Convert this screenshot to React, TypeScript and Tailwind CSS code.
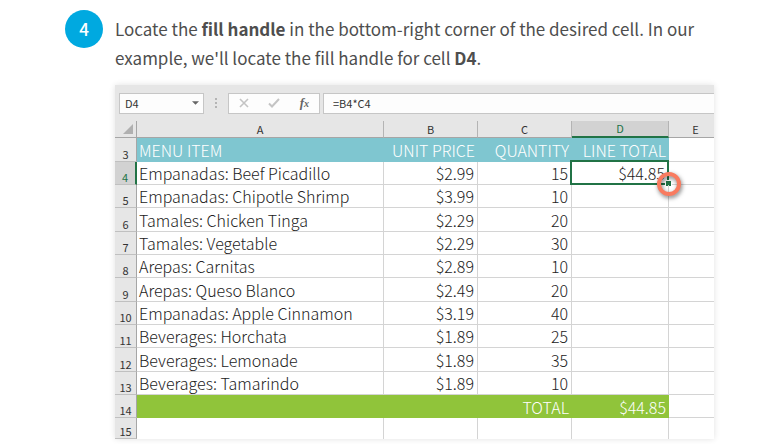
const rows = [
  { n: 4, item: "Empanadas: Beef Picadillo", price: "$2.99", qty: "15", total: "$44.85" },
  { n: 5, item: "Empanadas: Chipotle Shrimp", price: "$3.99", qty: "10", total: "" },
  { n: 6, item: "Tamales: Chicken Tinga", price: "$2.29", qty: "20", total: "" },
  { n: 7, item: "Tamales: Vegetable", price: "$2.29", qty: "30", total: "" },
  { n: 8, item: "Arepas: Carnitas", price: "$2.89", qty: "10", total: "" },
  { n: 9, item: "Arepas: Queso Blanco", price: "$2.49", qty: "20", total: "" },
  { n: 10, item: "Empanadas: Apple Cinnamon", price: "$3.19", qty: "40", total: "" },
  { n: 11, item: "Beverages: Horchata", price: "$1.89", qty: "25", total: "" },
  { n: 12, item: "Beverages: Lemonade", price: "$1.89", qty: "35", total: "" },
  { n: 13, item: "Beverages: Tamarindo", price: "$1.89", qty: "10", total: "" },
];

const rowHeight = (n: number) => (n % 3 === 0 ? "h-[24px]" : "h-[23px]");

const cell = "border-r border-b border-[#d4d4d4] p-0";
const text = "pr-[3px] pl-[2px]";
const band = "p-0 pr-[3px] pl-[2px] text-white";

function RowHead({ n, active = false }: { n: number; active?: boolean }) {
  return (
    <th
      scope="row"
      className={`border-b border-b-[#c0c0c0] p-0 align-bottom text-[11px] leading-[14px] font-normal ${
        active
          ? "border-r-2 border-r-[#217346] bg-[#d2d2d2] text-[#217346]"
          : "border-r border-r-[#a6a6a6] bg-[#e6e6e6] text-[#333]"
      }`}
    >
      {n}
    </th>
  );
}

function ColHead({ name, active = false }: { name: string; active?: boolean }) {
  return (
    <th
      scope="col"
      className={`border-r border-r-[#b4b4b4] p-0 text-[11px] leading-[15px] font-normal ${
        active
          ? "border-b-2 border-b-[#217346] bg-[#d2d2d2] text-[#217346]"
          : "border-b border-b-[#a6a6a6] text-[#333] last:border-r-0 last:pl-2"
      }`}
    >
      {name}
    </th>
  );
}

function FillHandle() {
  return (
    <>
      <span className="pointer-events-none absolute -top-[2px] -right-px -bottom-px -left-[2px] border-2 border-[#217346]" />
      <svg
        className="absolute -right-[17px] -bottom-[16px] z-10 h-8 w-8 overflow-visible drop-shadow-[1px_2px_2px_rgba(0,0,0,0.5)]"
        viewBox="0 0 32 32"
        aria-label="Fill handle"
      >
        <circle cx="16" cy="16" r="10" fill="none" stroke="#f97b5f" strokeWidth="4" />
      </svg>
      <span className="absolute -right-[3px] -bottom-[2px] h-[5px] w-[5px] bg-[#217346] outline-1 outline-white" />
    </>
  );
}

export default function App() {
  return (
    <main className="bg-white pt-[14px] pr-[47px] pb-[5px] pl-[65px] font-['Noto_Sans_CJK_SC','Noto_Sans',sans-serif]">
      <div className="flex items-start">
        <div className="mt-[-4px] flex h-[38px] w-[38px] shrink-0 items-center justify-center rounded-full bg-[#00a9e0] text-[17px] font-medium text-white">
          4
        </div>
        <p className="ml-3 text-[17px] leading-[29px] text-[#4e4e4e]">
          Locate the <strong className="font-bold">fill handle</strong> in the bottom-right corner of the
          desired cell. In our example, we'll locate the fill handle for cell{" "}
          <strong className="font-bold">D4</strong>.
        </p>
      </div>

      <section className="mt-[13px] ml-[50px] bg-white shadow-[0_0_6px_rgba(0,0,0,0.12)]">
        <div className="flex h-9 items-center bg-[#e6e6e6] pl-1 text-[11px] text-[#333]">
          <div className="flex h-[21px] w-[85px] items-center border border-[#c6c6c6] bg-[#fdfdfd]">
            <input aria-label="Name box" defaultValue="D4" className="w-0 flex-1 pl-[5px] outline-none" />
            <button aria-label="Show names" className="px-1">
              <svg viewBox="0 0 8 4" className="h-1 w-[7px]" fill="#666">
                <path d="M0 0h8L4 4z" />
              </svg>
            </button>
          </div>
          <svg viewBox="0 0 2 10" className="mx-[11px] h-[10px] w-[2px]" fill="#b4b4b4">
            <path d="M0 0h2v2H0zM0 4h2v2H0zM0 8h2v2H0z" />
          </svg>
          <div className="flex h-[21px] w-[92px] items-center justify-between border border-[#c6c6c6] bg-[#fdfdfd] px-[10px]">
            <button aria-label="Cancel">
              <svg viewBox="0 0 10 10" className="h-[10px] w-[10px]" fill="none" stroke="#c4c4c4" strokeWidth="1.6">
                <path d="M1 1l8 8M9 1L1 9" />
              </svg>
            </button>
            <button aria-label="Enter">
              <svg viewBox="0 0 12 10" className="h-[10px] w-3" fill="none" stroke="#c4c4c4" strokeWidth="2">
                <path d="M1 5.500l3 3L11 1" />
              </svg>
            </button>
            <button
              aria-label="Insert function"
              className="font-['Liberation_Serif',serif] text-[13px] leading-4 font-bold text-[#666] italic"
            >
              f<span className="text-[10px]">x</span>
            </button>
          </div>
          <input
            aria-label="Formula bar"
            defaultValue="=B4*C4"
            className="ml-[3px] h-[21px] min-w-0 flex-1 border border-r-0 border-[#c6c6c6] bg-[#fdfdfd] pl-[9px] outline-none"
          />
        </div>

        <table className="w-full table-fixed border-separate border-spacing-0 text-[16px] leading-[22px] font-light text-[#222]">
          <colgroup>
            <col className="w-[22px]" />
            <col />
            <col className="w-[94px]" />
            <col className="w-[94px]" />
            <col className="w-[97px]" />
            <col className="w-[45px]" />
          </colgroup>
          <thead>
            <tr className="h-[17px] bg-[#e6e6e6]">
              <td className="border-r border-b border-[#a6a6a6] p-0">
                <svg viewBox="0 0 10 10" className="ml-auto mr-[3px] h-[10px] w-[10px]" fill="#b0b0b0">
                  <path d="M10 0v10H0z" />
                </svg>
              </td>
              <ColHead name="A" />
              <ColHead name="B" />
              <ColHead name="C" />
              <ColHead name="D" active />
              <ColHead name="E" />
            </tr>
          </thead>
          <tbody>
            <tr className="h-[24px]">
              <RowHead n={3} />
              <td className={`${band} bg-[#7fc6d0]`}>MENU ITEM</td>
              <td className={`${band} bg-[#7fc6d0] text-right`}>UNIT PRICE</td>
              <td className={`${band} bg-[#7fc6d0] text-right`}>QUANTITY</td>
              <td className={`${band} bg-[#7fc6d0] text-right whitespace-nowrap`}>LINE TOTAL</td>
              <td className="border-b border-[#d4d4d4] p-0" />
            </tr>
            {rows.map((r) => (
              <tr key={r.n} className={rowHeight(r.n)}>
                <RowHead n={r.n} active={r.n === 4} />
                <td className={`${cell} ${text} whitespace-nowrap`}>{r.item}</td>
                <td className={`${cell} ${text} text-right`}>{r.price}</td>
                <td className={`${cell} ${text} text-right`}>{r.qty}</td>
                <td className={`${cell} ${text} relative text-right`}>
                  {r.total}
                  {r.n === 4 && <FillHandle />}
                </td>
                <td className="border-b border-[#d4d4d4] p-0" />
              </tr>
            ))}
            <tr className="h-[23px]">
              <RowHead n={14} />
              <td className="bg-[#90c43a] p-0" />
              <td className="bg-[#90c43a] p-0" />
              <td className={`${band} bg-[#90c43a] text-right`}>TOTAL</td>
              <td className={`${band} bg-[#90c43a] text-right`}>$44.85</td>
              <td className="border-b border-[#d4d4d4] p-0" />
            </tr>
            <tr className="h-[21px]">
              <RowHead n={15} />
              <td className="border-r border-[#d4d4d4] p-0" />
              <td className="border-r border-[#d4d4d4] p-0" />
              <td className="border-r border-[#d4d4d4] p-0" />
              <td className="border-r border-[#d4d4d4] p-0" />
              <td className="p-0" />
            </tr>
          </tbody>
        </table>
      </section>
    </main>
  );
}
